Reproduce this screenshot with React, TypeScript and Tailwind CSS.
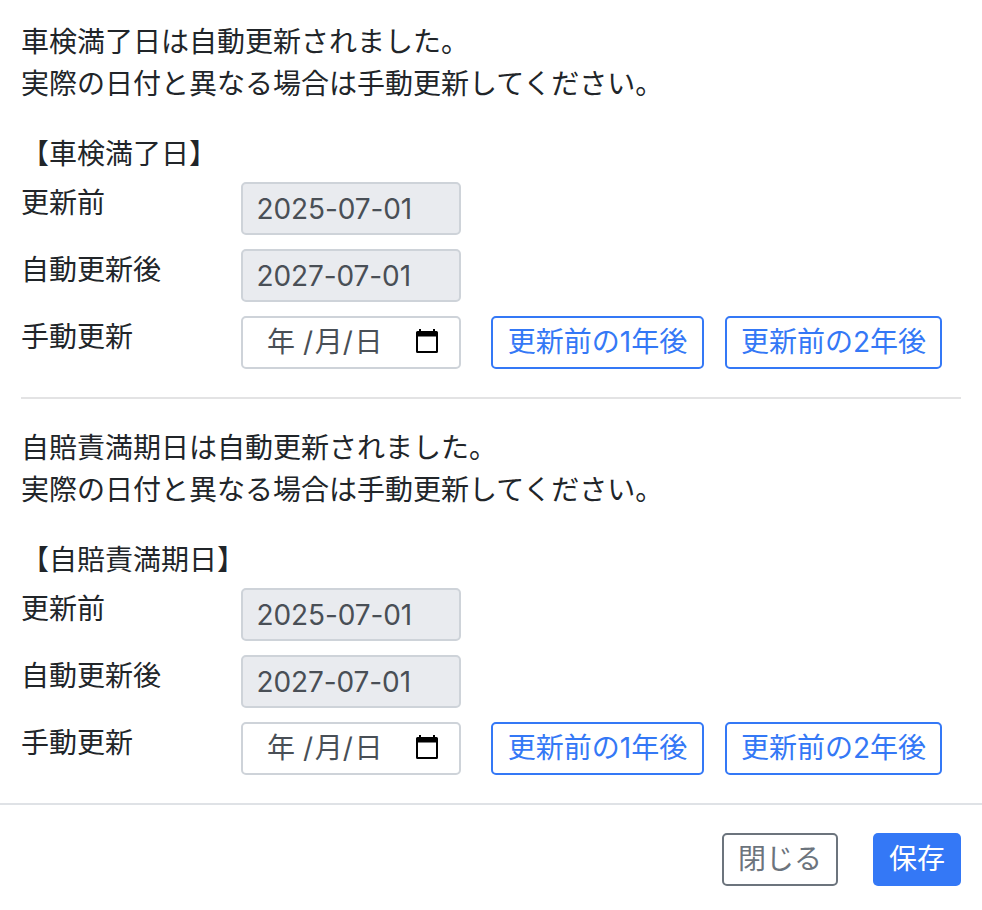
interface DateSectionProps {
  name: string;
  before: string;
  after: string;
}

function CalendarIcon() {
  return (
    <svg className="mb-0.5" width="22" height="24" viewBox="0 0 22 24" fill="none">
      <path
        d="M3 0h2v2h12V0h2v2h1.5A1.5 1.5 0 0 1 22 3.5v19a1.5 1.5 0 0 1-1.5 1.5h-19A1.5 1.5 0 0 1 0 22.5v-19A1.5 1.5 0 0 1 1.5 2H3V0ZM2 7.500v14.500h18V7.500H2Z"
        fill="#000"
        fillRule="evenodd"
      />
    </svg>
  );
}

function ReadonlyRow({ label, value }: { label: string; value: string }) {
  return (
    <div className="flex h-[67px]">
      <div className="w-[220px] leading-[42px]">{label}</div>
      <div className="h-[53px] w-[220px] rounded-[5px] border-2 border-[#ced3d9] bg-[#e9ebef] pl-[13.5px] font-['Inter'] text-[28px] leading-[51px] tracking-[-0.1px] text-[#494f56]">
        {value}
      </div>
    </div>
  );
}

function YearButton({ years, className }: { years: number; className: string }) {
  return (
    <button className={`rounded-[5px] border-2 border-[#3478f6] pb-0.5 text-[#3478f6] ${className}`}>
      更新前の{years}年後
    </button>
  );
}

function DateSection({ name, before, after }: DateSectionProps) {
  return (
    <section>
      <p className="leading-[42px]">
        {name}は自動更新されました。
        <br />
        実際の日付と異なる場合は手動更新してください。
      </p>
      <h2 className="mt-[28px] leading-[42px]">【{name}】</h2>
      <div className="mt-[7px]">
        <ReadonlyRow label="更新前" value={before} />
        <ReadonlyRow label="自動更新後" value={after} />
        <div className="flex h-[53px]">
          <div className="w-[220px] leading-[42px]">手動更新</div>
          <div className="flex w-[220px] items-center justify-between rounded-[5px] border-2 border-[#ced3d9] pr-[21px] pb-0.5 pl-[24px] text-[#494f56]">
            <span className="whitespace-pre">
              年 <span className="tracking-[1.7px]">/</span>月<span className="tracking-[1.7px]">/</span>日
            </span>
            <CalendarIcon />
          </div>
          <YearButton years={1} className="ml-[30px] w-[213px]" />
          <YearButton years={2} className="ml-[21px] w-[217px]" />
        </div>
      </div>
    </section>
  );
}

export default function App() {
  return (
    <div className="h-[910px] w-[982px] bg-white font-['Inter','Noto_Sans_CJK_JP',sans-serif] text-[28px] text-[#212529]">
      <div className="h-[805px] border-b-2 border-[#dfe2e6] px-[21px] pt-[21px]">
        <DateSection name="車検満了日" before="2025-07-01" after="2027-07-01" />
        <hr className="my-[28px] border-t-2 border-[#e3e3e4]" />
        <DateSection name="自賠責満期日" before="2025-07-01" after="2027-07-01" />
      </div>
      <div className="flex justify-end gap-[35px] pt-[28px] pr-[21px]">
        <button className="h-[53px] w-[116px] rounded-[5px] border-2 border-[#6c747d] pb-0.5 text-[#6c747d]">閉じる</button>
        <button className="h-[53px] w-[88px] rounded-[5px] bg-[#3478f6] pb-0.5 text-white">保存</button>
      </div>
    </div>
  );
}
